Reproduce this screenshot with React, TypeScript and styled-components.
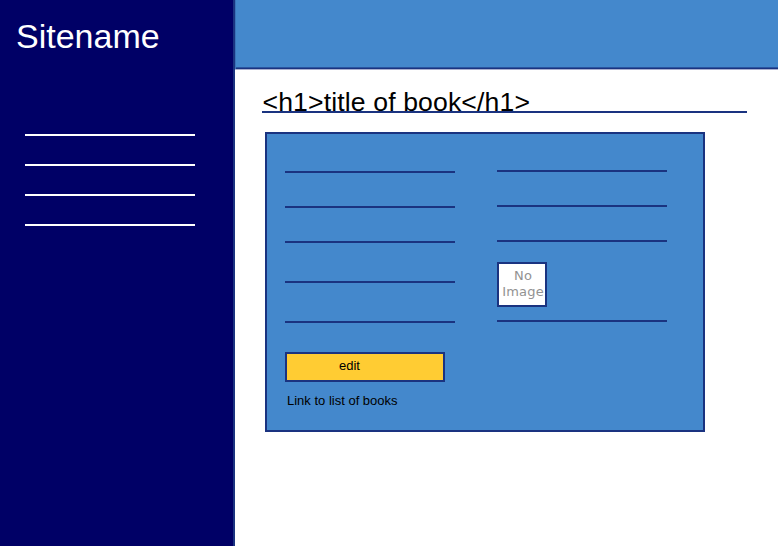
import React from 'react';
import styled, { createGlobalStyle } from 'styled-components';

const navy = '#000066';
const blue = '#4488cc';
const outline = '#1a3380';

const GlobalStyle = createGlobalStyle`
  * { box-sizing: border-box; }
  body { margin: 0; background: #fff; font-family: "Liberation Sans", Arial, sans-serif; }
`;

const Page = styled.div`
  display: grid;
  grid-template-columns: 235px 1fr;
  height: 546px;
  overflow: hidden;
`;

const Sidebar = styled.aside`
  background: ${navy};
  border-right: 2px solid ${outline};
`;

const SiteName = styled.div`
  height: 134px;
  padding: 17px 0 0 16px;
  font-size: 34px;
  line-height: 39px;
  color: #fff;
`;

const Nav = styled.nav`
  display: flex;
  flex-direction: column;
  gap: 28px;
  padding-left: 25px;
`;

const Rule = styled.div<{ $color?: string; $gap?: number }>`
  width: 170px;
  height: 2px;
  flex-shrink: 0;
  margin-top: ${({ $gap = 0 }) => $gap}px;
  background: ${({ $color = outline }) => $color};
`;

const Main = styled.main`
  min-width: 0;
`;

const TopBar = styled.header`
  height: 70px;
  background: ${blue};
  border-bottom: 1px solid #aab0cf;
  box-shadow: inset 1px 0 #3a74b8, inset 0 -1px ${outline}, inset 0 -2px #2a55a0;
`;

const Title = styled.h1`
  width: 485px;
  height: 43px;
  margin: 0 0 0 27px;
  padding: 17px 0 0 0.5px;
  border-bottom: 2px solid ${outline};
  font-size: 26.6px;
  letter-spacing: 0.13px;
  font-weight: 400;
  line-height: 31px;
  white-space: nowrap;
  color: #000;
`;

const Card = styled.section`
  display: grid;
  grid-template-columns: 212px 1fr;
  width: 440px;
  height: 300px;
  margin: 19px 0 0 30px;
  padding-left: 18px;
  background: ${blue};
  border: 2px solid ${outline};
`;

const Column = styled.div`
  display: flex;
  flex-direction: column;
  align-items: flex-start;
`;

const EditButton = styled.button`
  width: 160px;
  height: 30px;
  margin: 29px 0 0;
  padding: 0 0 3px 52px;
  border: 2px solid ${outline};
  background: #ffcc33;
  font: 13px/15px "Liberation Sans", Arial, sans-serif;
  text-align: left;
  color: #000;
`;

const BooksLink = styled.a`
  margin: 11px 0 0 2px;
  font-size: 13px;
  line-height: 15px;
  color: #000;
`;

const NoImage = styled.div`
  width: 50px;
  height: 45px;
  margin-top: 20px;
  padding: 4px 0 0 2px;
  border: 2px solid ${outline};
  background: #fff;
  font: 13px/16px "DejaVu Sans", sans-serif;
  letter-spacing: 0.2px;
  text-align: center;
  white-space: nowrap;
  color: #929292;
`;

export default function App() {
  return (
    <>
      <GlobalStyle />
      <Page>
        <Sidebar>
          <SiteName>Sitename</SiteName>
          <Nav>
            {[0, 1, 2, 3].map((item) => (
              <Rule key={item} $color="#fff" />
            ))}
          </Nav>
        </Sidebar>
        <Main>
          <TopBar />
          <Title>&lt;h1&gt;title of book&lt;/h1&gt;</Title>
          <Card>
            <Column>
              {[37, 33, 33, 38, 38].map((gap, i) => (
                <Rule key={i} $gap={gap} />
              ))}
              <EditButton>edit</EditButton>
              <BooksLink>Link to list of books</BooksLink>
            </Column>
            <Column>
              {[36, 33, 33].map((gap, i) => (
                <Rule key={i} $gap={gap} />
              ))}
              <NoImage>
                No
                <br />
                Image
              </NoImage>
              <Rule $gap={13} />
            </Column>
          </Card>
        </Main>
      </Page>
    </>
  );
}
